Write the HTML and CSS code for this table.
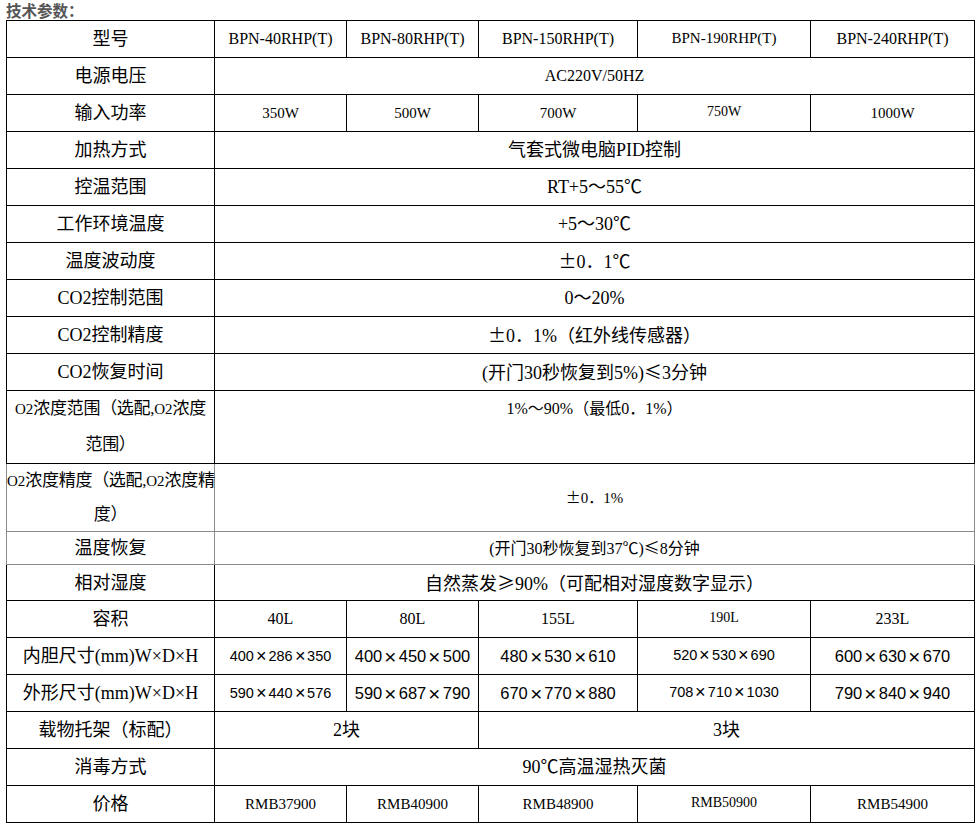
FILE: index.html
```html
<!DOCTYPE html>
<html lang="zh-CN">
<head>
<meta charset="utf-8">
<title>技术参数</title>
<link rel="stylesheet" href="styles.css">
</head>
<body>
<div class="page">
  <p class="title">技术参数：</p>
  <table class="spec">
    <colgroup>
      <col class="c-label">
      <col class="c-a">
      <col class="c-b">
      <col class="c-c">
      <col class="c-d">
      <col class="c-e">
    </colgroup>
    <tbody>
      <tr class="r">
        <td class="lbl">型号</td>
        <td>BPN-40RHP(T)</td>
        <td>BPN-80RHP(T)</td>
        <td>BPN-150RHP(T)</td>
        <td class="sm15">BPN-190RHP(T)</td>
        <td>BPN-240RHP(T)</td>
      </tr>
      <tr class="r">
        <td class="lbl">电源电压</td>
        <td colspan="5">AC220V/50HZ</td>
      </tr>
      <tr class="r">
        <td class="lbl">输入功率</td>
        <td class="n15">350W</td>
        <td class="n15">500W</td>
        <td class="n15">700W</td>
        <td class="sm">750W</td>
        <td class="n15">1000W</td>
      </tr>
      <tr class="r">
        <td class="lbl">加热方式</td>
        <td colspan="5" class="zh">气套式微电脑PID控制</td>
      </tr>
      <tr class="r">
        <td class="lbl">控温范围</td>
        <td colspan="5" class="zh">RT+5～55℃</td>
      </tr>
      <tr class="r">
        <td class="lbl">工作环境温度</td>
        <td colspan="5" class="zh">+5～30℃</td>
      </tr>
      <tr class="r">
        <td class="lbl">温度波动度</td>
        <td colspan="5" class="zh"><span class="cjk">±</span>0．1℃</td>
      </tr>
      <tr class="r">
        <td class="lbl">CO2控制范围</td>
        <td colspan="5" class="zh">0～20%</td>
      </tr>
      <tr class="r">
        <td class="lbl">CO2控制精度</td>
        <td colspan="5" class="zh"><span class="cjk">±</span>0．1%（红外线传感器）</td>
      </tr>
      <tr class="r">
        <td class="lbl">CO2恢复时间</td>
        <td colspan="5" class="zh">(开门30秒恢复到5%)<span class="cjk">≤</span>3分钟</td>
      </tr>
      <tr class="r-o2a">
        <td class="lbl lbl-two lh36"><span class="lat">O2</span>浓度范围（选配,<span class="lat">O2</span>浓度<br>范围）</td>
        <td colspan="5" class="zh16 top">1%～90%（最低0．1%）</td>
      </tr>
      <tr class="r-o2b soft">
        <td class="lbl lbl-two lh33"><span class="lat">O2</span>浓度精度（选配,<span class="lat">O2</span>浓度精<br>度）</td>
        <td colspan="5" class="n15"><span class="cjk">±</span>0．1%</td>
      </tr>
      <tr class="r-short soft">
        <td class="lbl">温度恢复</td>
        <td colspan="5" class="zh16">(开门30秒恢复到37℃)<span class="cjk">≤</span>8分钟</td>
      </tr>
      <tr class="r-36">
        <td class="lbl">相对湿度</td>
        <td colspan="5" class="zh">自然蒸发<span class="cjk">≥</span>90%（可配相对湿度数字显示）</td>
      </tr>
      <tr class="r">
        <td class="lbl">容积</td>
        <td>40L</td>
        <td>80L</td>
        <td>155L</td>
        <td class="sm">190L</td>
        <td>233L</td>
      </tr>
      <tr class="r">
        <td class="lbl">内胆尺寸(mm)W×D×H</td>
        <td class="dim dim-sm">400<span class="x">×</span>286<span class="x">×</span>350</td>
        <td class="dim">400<span class="x">×</span>450<span class="x">×</span>500</td>
        <td class="dim">480<span class="x">×</span>530<span class="x">×</span>610</td>
        <td class="dim dim-sm raise">520<span class="x">×</span>530<span class="x">×</span>690</td>
        <td class="dim">600<span class="x">×</span>630<span class="x">×</span>670</td>
      </tr>
      <tr class="r">
        <td class="lbl">外形尺寸(mm)W×D×H</td>
        <td class="dim dim-sm">590<span class="x">×</span>440<span class="x">×</span>576</td>
        <td class="dim">590<span class="x">×</span>687<span class="x">×</span>790</td>
        <td class="dim">670<span class="x">×</span>770<span class="x">×</span>880</td>
        <td class="dim dim-sm raise">708<span class="x">×</span>710<span class="x">×</span>1030</td>
        <td class="dim">790<span class="x">×</span>840<span class="x">×</span>940</td>
      </tr>
      <tr class="r">
        <td class="lbl">载物托架（标配）</td>
        <td colspan="2" class="zh">2块</td>
        <td colspan="3" class="zh">3块</td>
      </tr>
      <tr class="r">
        <td class="lbl">消毒方式</td>
        <td colspan="5" class="zh">90℃高温湿热灭菌</td>
      </tr>
      <tr class="r">
        <td class="lbl">价格</td>
        <td class="n15">RMB37900</td>
        <td class="n15">RMB40900</td>
        <td class="n15">RMB48900</td>
        <td class="sm">RMB50900</td>
        <td class="n15">RMB54900</td>
      </tr>
    </tbody>
  </table>
  <p class="after">技术特点：</p>
</div>
</body>
</html>
```

FILE: styles.css
```css
html, body {
  margin: 0;
  padding: 0;
  background: #ffffff;
}

body {
  font-family: "Liberation Serif", "Noto Sans CJK SC", serif;
  color: #000000;
}

.page {
  padding-left: 6px;
}

.title {
  margin: 0;
  height: 20px;
  line-height: 20px;
  font-family: "Noto Sans CJK SC", sans-serif;
  font-size: 15.5px;
  font-weight: bold;
  color: #555555;
}

.spec {
  border-collapse: collapse;
  table-layout: fixed;
  width: 969px;
}

.c-label { width: 208px; }
.c-a { width: 132px; }
.c-b { width: 132px; }
.c-c { width: 159px; }
.c-d { width: 173px; }
.c-e { width: 164px; }

.spec td {
  border: 1px solid #000000;
  padding: 0;
  text-align: center;
  vertical-align: middle;
  white-space: nowrap;
  font-size: 16px;
  line-height: 20px;
}

.r td { height: 36px; }
.r-o2a td { height: 72px; }
.r-o2b td { height: 66px; }
.r-short td { height: 32px; }
.r-36 td { height: 35px; }

.soft td { border-color: #8a8a8a; }

.spec td.lbl {
  font-family: "Liberation Serif", "Noto Sans CJK SC", serif;
  font-size: 18px;
}

.spec td.lbl-two {
  font-size: 17px;
  letter-spacing: -0.3px;
}

.spec td.lh36 { line-height: 36px; }
.spec td.lh33 { line-height: 33px; }

.lat {
  font-size: 15px;
  letter-spacing: 0;
}

.cjk {
  font-family: "Noto Sans CJK SC", sans-serif;
}

.spec td.zh {
  font-size: 18px;
}

.spec td.zh16 {
  font-size: 16px;
}

.spec td.top {
  vertical-align: top;
  line-height: 36px;
}

.spec td.n15 {
  font-size: 15px;
}

/* cells whose text sits a little higher: padding counts into the row,
   so the content height is reduced by the same amount */
.spec td.sm15 {
  font-size: 15px;
  height: 33px;
  padding-bottom: 3px;
}

.spec td.sm {
  font-size: 14px;
  height: 33px;
  padding-bottom: 3px;
}

.spec td.dim {
  font-family: "Liberation Sans", "Noto Sans CJK SC", sans-serif;
  font-size: 16.5px;
}

.spec td.dim-sm {
  font-size: 14.5px;
}

.spec td.raise {
  height: 33px;
  padding-bottom: 3px;
}

.x {
  display: inline-block;
  width: 1em;
  line-height: 16px;
  text-align: center;
  font-family: "Liberation Sans", sans-serif;
  transform: scale(1.25);
}

.after {
  margin: 0;
  line-height: 16px;
  font-family: "Noto Sans CJK SC", sans-serif;
  font-size: 15px;
  font-weight: bold;
  color: #000000;
}
```
